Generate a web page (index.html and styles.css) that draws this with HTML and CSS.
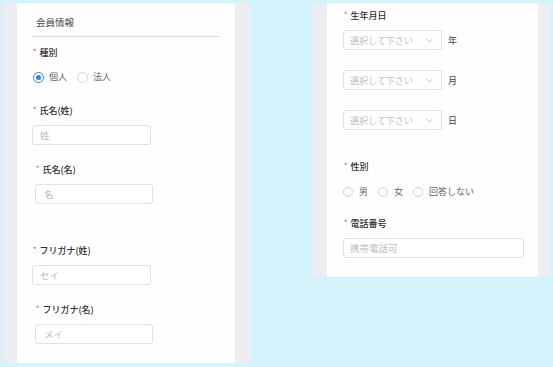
FILE: index.html
```html
<!DOCTYPE html>
<html lang="ja">
<head>
    <meta charset="UTF-8">
    <meta name="viewport" content="width=device-width, initial-scale=1.0">
    <title>会員情報</title>
    <link rel="stylesheet" href="styles.css">
</head>
<body>
    <div class="shots">
        <!-- left screen -->
        <section class="shot shot-left">
            <div class="card card-left">
                <h2 class="card-title">会員情報</h2>

                <div class="field gap-sm">
                    <div class="field-label"><span class="req">*</span>種別</div>
                    <div class="radios radios-left">
                        <label class="radio"><span class="dot checked"></span>個人</label>
                        <label class="radio"><span class="dot"></span>法人</label>
                    </div>
                </div>

                <div class="field gap-md">
                    <div class="field-label"><span class="req">*</span>氏名(姓)</div>
                    <input class="text-input" type="text" placeholder="姓">
                </div>

                <div class="field shift">
                    <div class="field-label"><span class="req">*</span>氏名(名)</div>
                    <input class="text-input" type="text" placeholder="名">
                </div>

                <div class="field gap-lg">
                    <div class="field-label"><span class="req">*</span>フリガナ(姓)</div>
                    <input class="text-input" type="text" placeholder="セイ">
                </div>

                <div class="field shift">
                    <div class="field-label"><span class="req">*</span>フリガナ(名)</div>
                    <input class="text-input" type="text" placeholder="メイ">
                </div>
            </div>
        </section>

        <!-- right screen -->
        <section class="shot shot-right">
            <div class="card card-right">
                <div class="field-label"><span class="req">*</span>生年月日</div>
                <div class="date-row first">
                    <div class="select">選択して下さい<svg class="chevron" width="7" height="5" viewBox="0 0 7 5"><polyline points="0.5,0.8 3.5,3.8 6.5,0.8" fill="none" stroke="#b8b8b8" stroke-width="0.9"/></svg></div>
                    <span class="unit">年</span>
                </div>
                <div class="date-row">
                    <div class="select">選択して下さい<svg class="chevron" width="7" height="5" viewBox="0 0 7 5"><polyline points="0.5,0.8 3.5,3.8 6.5,0.8" fill="none" stroke="#b8b8b8" stroke-width="0.9"/></svg></div>
                    <span class="unit">月</span>
                </div>
                <div class="date-row">
                    <div class="select">選択して下さい<svg class="chevron" width="7" height="5" viewBox="0 0 7 5"><polyline points="0.5,0.8 3.5,3.8 6.5,0.8" fill="none" stroke="#b8b8b8" stroke-width="0.9"/></svg></div>
                    <span class="unit">日</span>
                </div>

                <div class="field gap-gender">
                    <div class="field-label"><span class="req">*</span>性別</div>
                    <div class="radios radios-right">
                        <label class="radio"><span class="dot"></span>男</label>
                        <label class="radio"><span class="dot"></span>女</label>
                        <label class="radio"><span class="dot"></span>回答しない</label>
                    </div>
                </div>

                <div class="field gap-phone">
                    <div class="field-label"><span class="req">*</span>電話番号</div>
                    <input class="text-input wide" type="text" placeholder="携帯電話可">
                </div>
            </div>
        </section>
    </div>
</body>
</html>
```

FILE: styles.css
```css
body {
    margin: 0;
    background-color: #d3f4fc;
    font-family: "Noto Sans CJK JP", "Noto Sans", sans-serif;
    font-size: 9px;
    color: #333;
}
.shots {
    display: flex;
    align-items: flex-start;
    gap: 61px;
    padding-top: 3px;
}
.shot {
    display: flex;
    background-color: #eceef3;
}
.shot-left {
    width: 251px;
    height: 360px;
    padding-left: 17px;
    box-sizing: border-box;
    background: linear-gradient(to right, #d8eff6 0, #eceef3 6px);
}
.shot-right {
    width: 238px;
    height: 274px;
    padding-left: 15px;
    box-sizing: border-box;
}
.card {
    background-color: #fefefe;
    box-sizing: border-box;
}
.card-left {
    width: 218px;
    padding: 13px 15px 0;
}
.card-right {
    width: 211px;
    padding: 7px 14px 0 16px;
}
.card-title {
    margin: 0;
    padding: 0 0 8px 4px;
    font-size: 9.5px;
    font-weight: normal;
    line-height: 12px;
    height: 12px;
    color: #444;
    border-bottom: 1px solid #dcdcdc;
}
.field {
    margin-top: 19px;
}
.field.gap-sm {
    margin-top: 10px;
}
.field.gap-md {
    margin-top: 22px;
}
.field.gap-lg {
    margin-top: 41px;
}
.field.gap-gender {
    margin-top: 31px;
}
.field.gap-phone {
    margin-top: 20px;
}
.field.shift {
    padding-left: 3px;
}
.field-label {
    display: flex;
    align-items: center;
    height: 12px;
    line-height: 12px;
    padding-left: 1px;
    color: #2e2e2e;
    font-weight: 500;
}
.req {
    color: #e0525d;
    font-size: 7px;
    line-height: 7px;
    margin: -3px 3px 0 0;
}
.radios {
    display: flex;
    align-items: center;
    height: 12px;
}
.radios-left {
    margin-top: 12px;
    padding-left: 1px;
}
.radios-right {
    margin-top: 13px;
}
.radio {
    display: flex;
    align-items: center;
    margin-right: 10px;
    color: #666;
    line-height: 12px;
}
.dot {
    width: 9px;
    height: 9px;
    border: 1px solid #d4d4d4;
    border-radius: 50%;
    margin-right: 5px;
    box-sizing: content-box;
    position: relative;
}
.radios-right .dot {
    width: 8px;
    height: 8px;
    margin-right: 6px;
}
.dot.checked {
    border-color: #2c86e4;
}
.dot.checked::after {
    content: "";
    position: absolute;
    left: 2px;
    top: 2px;
    width: 5px;
    height: 5px;
    border-radius: 50%;
    background-color: #2c86e4;
}
.text-input {
    display: block;
    margin-top: 8px;
    width: 119px;
    height: 20px;
    padding: 0 7px;
    box-sizing: border-box;
    border: 1px solid #e0e0e0;
    border-radius: 3px;
    background-color: #fff;
    font-family: inherit;
    font-size: 9.5px;
    color: #333;
    outline: none;
}
.field.shift .text-input {
    width: 118px;
    padding-left: 8px;
}
.text-input::placeholder {
    color: #bcbcbc;
}
.text-input.wide {
    width: 181px;
    padding-left: 6px;
}
.date-row {
    display: flex;
    align-items: center;
    margin-top: 20px;
}
.date-row.first {
    margin-top: 8px;
}
.select {
    display: flex;
    align-items: center;
    justify-content: space-between;
    width: 99px;
    height: 20px;
    padding: 0 8px 0 6px;
    box-sizing: border-box;
    border: 1px solid #e0e0e0;
    border-radius: 3px;
    color: #c0c0c0;
}
.chevron {
    display: block;
}
.unit {
    margin-left: 6px;
    color: #444;
}
```
